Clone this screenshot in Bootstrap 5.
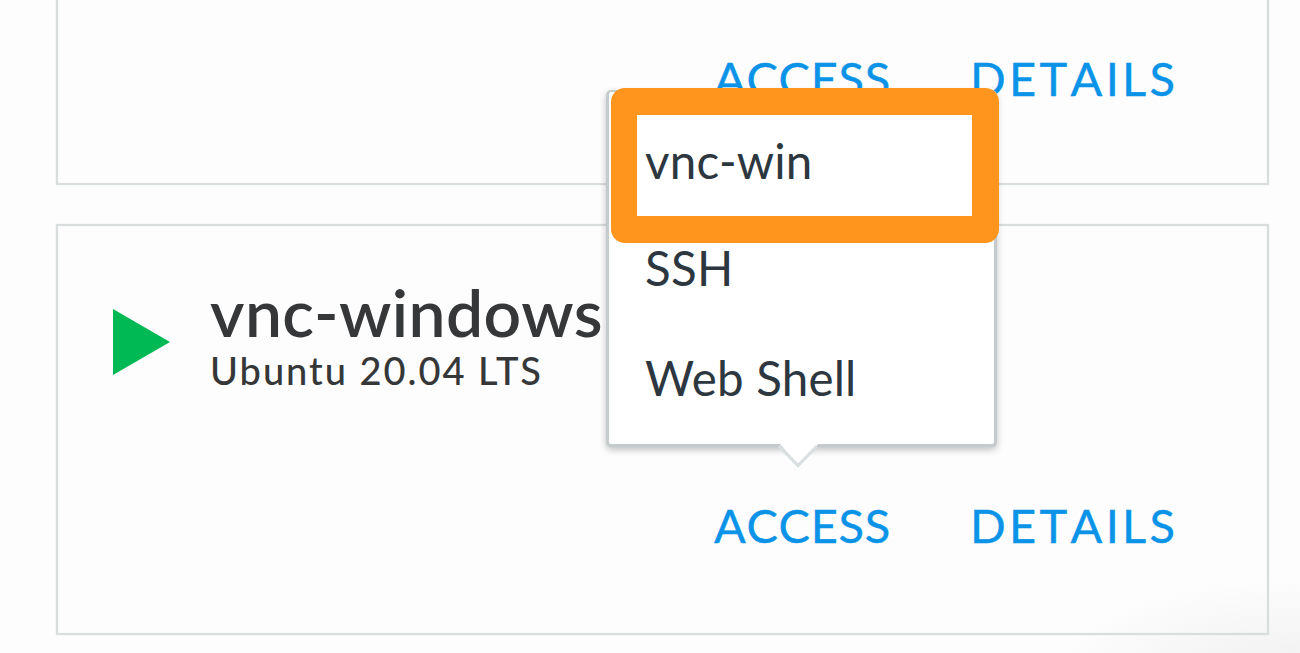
<!DOCTYPE html>
<html lang="en">
<head>
<meta charset="utf-8">
<meta name="viewport" content="width=device-width, initial-scale=1">
<title>Virtual machines</title>
<link href="https://cdn.jsdelivr.net/npm/bootstrap@5.3.0/dist/css/bootstrap.min.css" rel="stylesheet">
<style>
  body { height: 653px; font-family: Lato, sans-serif; color: #353738; background: radial-gradient(ellipse 240px 100px at 1290px 675px, #f0f0f0, #fdfdfd) #fdfdfd; }
  .vm-list { width: 1213px; margin-left: 56px; gap: 39px; }
  .vm-card { border: 2px solid #dadddd; border-radius: 0; background: transparent; box-shadow: 0 0 1px #dcdfdf, inset 0 0 1px #dcdfdf; }
  .vm-first { height: 195px; margin-top: -10px; padding-top: 58px; }
  .vm-second { height: 411px; padding-top: 47px; }
  .vm-head { padding-left: 55px; gap: 39px; height: 119px; }
  .vm-state { width: 58px; height: 66px; margin-top: 36px; }
  .vm-name { font-size: 66px; font-weight: 600; line-height: 77px; letter-spacing: .4px; margin: 0; }
  .vm-os { font-size: 38px; font-weight: 500; line-height: 42px; letter-spacing: 1.950px; margin-top: -1px; }
  .vm-actions { padding-right: 87px; }
  .vm-second .vm-actions { margin-top: 105px; }
  .vm-link { font-size: 47px; line-height: 56px; color: #0b93e8; -webkit-text-stroke: .4px #0b93e8; text-decoration: none; font-kerning: none; }
  .vm-access { letter-spacing: .7px; width: 256px; }
  .vm-details { letter-spacing: 3.300px; width: 210px; }
  .vm-menu { left: 606px; top: 90px; width: 391px; height: 357px; background: #fff; border: 3px solid #c5cacd; border-top-width: 2px; border-radius: 5px; box-shadow: 0 3px 7px rgba(0,0,0,.24); padding-top: 108px; }
  .vm-item { display: block; font-size: 47.500px; line-height: 56px; letter-spacing: .2px; color: #2d3740; text-decoration: none; }
  .vm-menu .vm-item { height: 110px; padding: 40px 0 0 36px; }
  .vm-arrow { left: 168px; top: 351px; width: 44px; height: 26px; }
  .vm-focus { left: 611px; top: 88px; width: 388px; height: 155px; background: #ff951c; border-radius: 14px; padding: 27px 27px 27px 26px; }
  .vm-focus .vm-item { height: 101px; padding: 18px 0 0 8px; background: #fff; }
</style>
</head>
<body class="position-relative overflow-hidden">
<main class="vm-list d-flex flex-column">
  <section class="vm-card vm-first card">
    <div class="vm-actions d-flex justify-content-end">
      <a class="vm-link vm-access" href="#">ACCESS</a>
      <a class="vm-link vm-details" href="#">DETAILS</a>
    </div>
  </section>
  <section class="vm-card vm-second card">
    <div class="vm-head d-flex">
      <svg class="vm-state" viewBox="0 0 58 66" aria-hidden="true"><path d="M0 0 57 33 0 66z" fill="#00b854"/></svg>
      <div>
        <h2 class="vm-name">vnc-windows</h2>
        <div class="vm-os">Ubuntu 20.04 LTS</div>
      </div>
    </div>
    <div class="vm-actions d-flex justify-content-end">
      <a class="vm-link vm-access" href="#">ACCESS</a>
      <a class="vm-link vm-details" href="#">DETAILS</a>
    </div>
  </section>
</main>
<!-- Access menu, opened above the second card's ACCESS link -->
<nav class="vm-menu position-absolute">
  <a class="vm-item" href="#">SSH</a>
  <a class="vm-item" href="#">Web Shell</a>
  <svg class="vm-arrow position-absolute" viewBox="0 0 44 26" aria-hidden="true"><path d="M2 0 22 22 42 0z" fill="#fff"/><path d="M2 3 21 22.500 40 3" fill="none" stroke="#d9dee0" stroke-width="3"/></svg>
</nav>
<div class="vm-focus position-absolute"><a class="vm-item" href="#">vnc-win</a></div>
<script src="https://cdn.jsdelivr.net/npm/bootstrap@5.3.0/dist/js/bootstrap.bundle.min.js"></script>
</body>
</html>
